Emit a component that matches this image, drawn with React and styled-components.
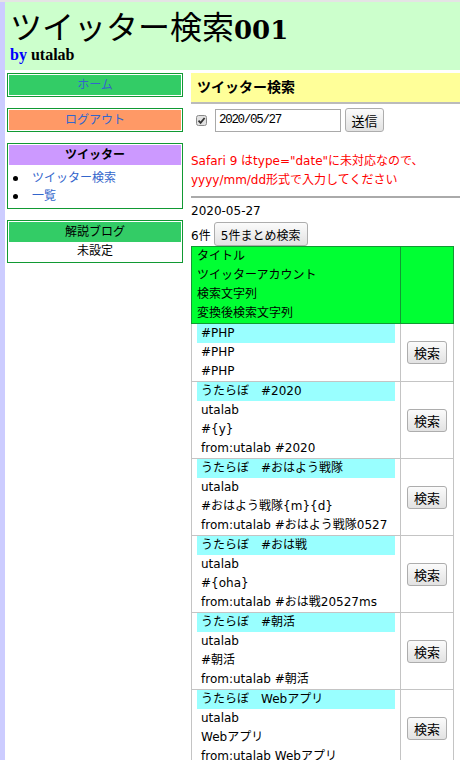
import React from "react";
import styled, { createGlobalStyle } from "styled-components";

const GlobalStyle = createGlobalStyle`
  html, body {
    margin: 0;
    padding: 0;
    background: #fff;
  }
  body {
    font-family: "DejaVu Sans", "Noto Sans CJK JP", sans-serif;
    font-size: 12px;
    color: #000;
  }
`;

const rows = [
  { title: "#PHP", account: "", search: "#PHP", converted: "#PHP" },
  { title: "うたらぼ　#2020", account: "utalab", search: "#{y}", converted: "from:utalab #2020" },
  {
    title: "うたらぼ　#おはよう戦隊",
    account: "utalab",
    search: "#おはよう戦隊{m}{d}",
    converted: "from:utalab #おはよう戦隊0527",
  },
  { title: "うたらぼ　#おは戦", account: "utalab", search: "#{oha}", converted: "from:utalab #おは戦20527ms" },
  { title: "うたらぼ　#朝活", account: "utalab", search: "#朝活", converted: "from:utalab #朝活" },
  { title: "うたらぼ　Webアプリ", account: "utalab", search: "Webアプリ", converted: "from:utalab Webアプリ" },
];

export default function App() {
  return (
    <>
      <GlobalStyle />
      <Page>
        <Inner>
          <Header>
            <Title>
              ツイッター検索<b>001</b>
            </Title>
            <ByLine>
              <span>by</span> utalab
            </ByLine>
          </Header>

          <Columns>
            <Sidebar>
              <Box>
                <BoxHead $bg="#33cc66" $color="#3366cc">ホーム</BoxHead>
              </Box>
              <Box>
                <BoxHead $bg="#ff9966" $color="#3366cc">ログアウト</BoxHead>
              </Box>
              <Box>
                <BoxHead $bg="#cc99ff" $bold>ツイッター</BoxHead>
                <MenuList>
                  <li>ツイッター検索</li>
                  <li>一覧</li>
                </MenuList>
              </Box>
              <Box>
                <BoxHead $bg="#33cc66">解説ブログ</BoxHead>
                <BoxText>未設定</BoxText>
              </Box>
            </Sidebar>

            <Main>
              <SectionHead>ツイッター検索</SectionHead>
              <FormRow>
                <CheckBox>
                  <svg width="11" height="11" viewBox="0 0 11 11">
                    <rect x="0.5" y="0.5" width="10" height="10" rx="2" fill="#e2e2e2" stroke="#8a8a8a" />
                    <path d="M2.5 5.6 L4.6 7.8 L8.6 3" fill="none" stroke="#333" strokeWidth="1.8" />
                  </svg>
                </CheckBox>
                <DateInput defaultValue="2020/05/27" />
                <SendButton>送信</SendButton>
              </FormRow>
              <Notice>
                Safari 9 はtype="date"に未対応なので、
                <br />
                yyyy/mm/dd形式で入力してください
              </Notice>
              <Rule />
              <DateLine>2020-05-27</DateLine>
              <CountRow>
                6件<BatchButton>5件まとめ検索</BatchButton>
              </CountRow>
              <ResultTable>
                <colgroup>
                  <WideCol />
                  <NarrowCol />
                </colgroup>
                <thead>
                  <tr>
                    <Th>
                      <div>タイトル</div>
                      <div>ツイッターアカウント</div>
                      <div>検索文字列</div>
                      <div>変換後検索文字列</div>
                    </Th>
                    <Th />
                  </tr>
                </thead>
                <tbody>
                  {rows.map((r, i) => (
                    <tr key={i}>
                      <Td>
                        <Line $cyan>{r.title}</Line>
                        {r.account && <Line>{r.account}</Line>}
                        <Line>{r.search}</Line>
                        <Line>{r.converted}</Line>
                      </Td>
                      <ActionTd>
                        <SearchButton>検索</SearchButton>
                      </ActionTd>
                    </tr>
                  ))}
                </tbody>
              </ResultTable>
            </Main>
          </Columns>
        </Inner>
      </Page>
    </>
  );
}

const Page = styled.div`
  border-top: 2px solid #e4e4e4;
`;

const Inner = styled.div`
  border-left: 5px solid #ccccff;
  min-height: calc(100vh - 2px);
  padding-bottom: 20px;
`;

const Header = styled.header`
  background: #ccffcc;
  height: 68px;
  box-sizing: border-box;
  padding: 10px 0 0 5px;
`;

const Title = styled.h1`
  margin: 0;
  font-family: "Liberation Serif", "Noto Sans CJK JP", serif;
  font-size: 32px;
  font-weight: normal;
  line-height: 32px;

  b {
    font-family: "DejaVu Serif", serif;
    font-size: 26px;
    font-weight: bold;
  }
`;

const ByLine = styled.div`
  font-family: "Liberation Serif", serif;
  font-size: 16px;
  font-weight: bold;
  line-height: 18px;

  span {
    color: #0000ff;
  }
`;

const Columns = styled.div`
  display: flex;
  align-items: flex-start;
  gap: 8px;
  padding: 3px 0 0 2px;
`;

const Sidebar = styled.aside`
  flex: none;
  width: 176px;
  display: flex;
  flex-direction: column;
  gap: 11px;
`;

const Box = styled.div`
  border: 1px solid #119933;
  padding: 1px;
`;

const BoxHead = styled.div`
  background: ${(p) => p.$bg};
  color: ${(p) => p.$color || "#000"};
  font-weight: ${(p) => (p.$bold ? "bold" : "normal")};
  text-align: center;
  line-height: 20px;
`;

const BoxText = styled.div`
  text-align: center;
  line-height: 19px;
`;

const MenuList = styled.ul`
  margin: 0;
  padding: 4px 0 2px 0;
  list-style: none;
  color: #3366cc;

  li {
    display: flex;
    align-items: center;
    line-height: 18px;
  }
  li::before {
    content: "";
    width: 5px;
    height: 5px;
    border-radius: 50%;
    background: #000;
    margin: 0 14px 0 4px;
  }
`;

const Main = styled.main`
  flex: 1;
  min-width: 0;
`;

const SectionHead = styled.div`
  background: #ffff99;
  height: 29px;
  line-height: 29px;
  padding-left: 6px;
  font-size: 14px;
  font-weight: bold;
  border-bottom: 2px solid #bbbbbb;
`;

const FormRow = styled.div`
  display: flex;
  align-items: center;
  height: 24px;
  margin-top: 4px;
  padding-left: 5px;
`;

const CheckBox = styled.span`
  display: inline-flex;
  width: 11px;
  height: 11px;
  margin-right: 8px;
`;

const DateInput = styled.input`
  box-sizing: border-box;
  width: 126px;
  height: 23px;
  border: 1px solid #a9a9a9;
  padding: 0 3px;
  font-family: "Liberation Mono", monospace;
  font-size: 12.5px;
  letter-spacing: -1.3px;
  color: #000;
  outline: none;
`;

const Btn = styled.button`
  box-sizing: border-box;
  padding: 0;
  font-family: inherit;
  color: #000;
  border: 1px solid #adadad;
  border-radius: 3px;
  background: linear-gradient(#fbfbfb, #e2e2e2);
  cursor: pointer;
`;

const SendButton = styled(Btn)`
  margin-left: 4px;
  width: 39px;
  height: 24px;
  font-size: 13px;
`;

const Notice = styled.div`
  margin-top: 20px;
  color: #ff0000;
  line-height: 19px;
`;

const Rule = styled.div`
  margin-top: 6px;
  height: 2px;
  background: #aaaaaa;
`;

const DateLine = styled.div`
  margin-top: 4px;
  line-height: 19px;
`;

const CountRow = styled.div`
  display: flex;
  align-items: center;
  height: 24px;
  margin-top: 1px;
`;

const BatchButton = styled(Btn)`
  margin-left: 3px;
  width: 94px;
  height: 24px;
  font-size: 12px;
`;

const ResultTable = styled.table`
  border-collapse: collapse;
  table-layout: fixed;
  width: 262px;
`;

const WideCol = styled.col`
  width: 209px;
`;

const NarrowCol = styled.col`
  width: 53px;
`;

const Th = styled.th`
  background: #00ff33;
  border: 1px solid #119933;
  padding: 0 5px;
  text-align: left;
  font-weight: normal;
  line-height: 19px;
  vertical-align: top;
  white-space: nowrap;
`;

const Td = styled.td`
  border: 1px solid #c4c4c4;
  padding: 0 5px;
  line-height: 19px;
  vertical-align: top;
  white-space: nowrap;
`;

const ActionTd = styled.td`
  border: 1px solid #c4c4c4;
  padding: 0;
  text-align: center;
  vertical-align: middle;
`;

const Line = styled.div`
  padding: 0 4px;
  background: ${(p) => (p.$cyan ? "#99ffff" : "transparent")};
`;

const SearchButton = styled(Btn)`
  width: 40px;
  height: 23px;
  font-size: 13px;
`;
